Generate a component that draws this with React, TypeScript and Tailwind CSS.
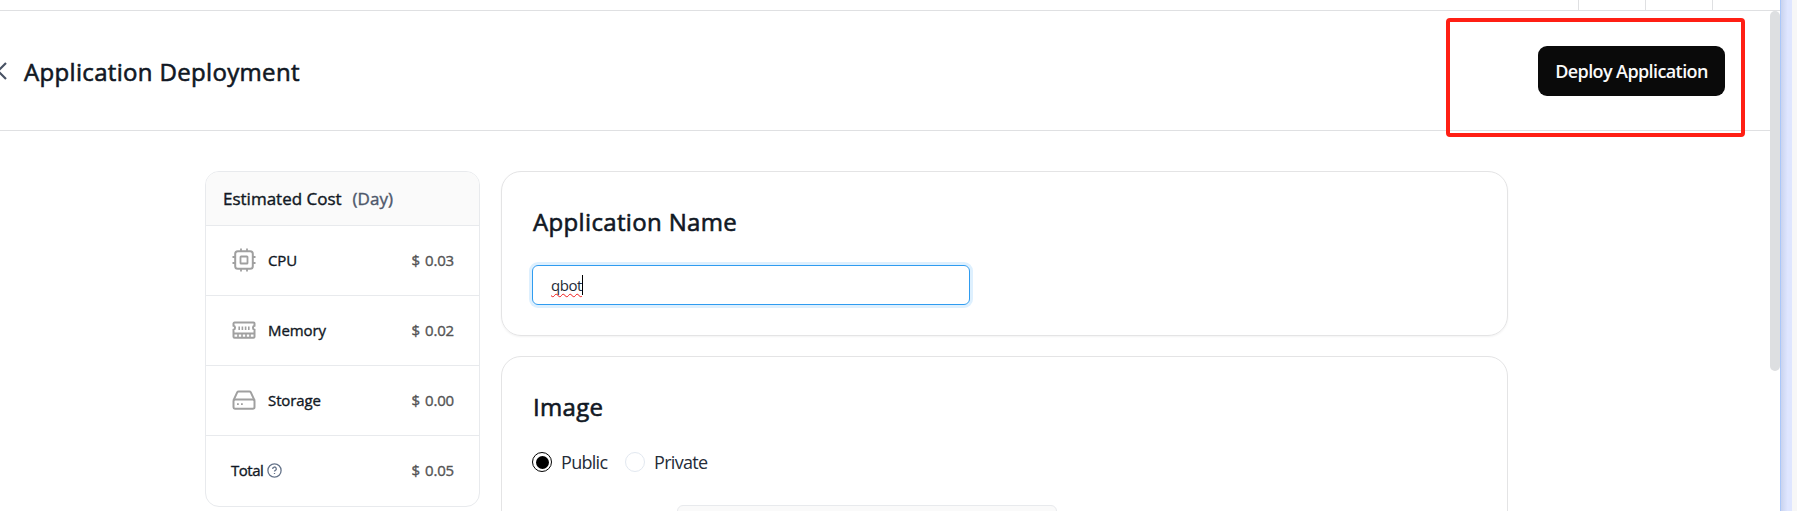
import type { ReactNode } from 'react';

function CpuIcon() {
  return (
    <svg width="24" height="24" viewBox="0 0 24 24" fill="none" stroke="#a0a0a0" strokeWidth="2">
      <rect x="3.200" y="3.200" width="17.600" height="17.600" rx="2.600" />
      <rect x="8.500" y="8.500" width="7" height="7" rx="0.600" strokeWidth="1.800" />
      <path d="M9 3V.5M15 3V.5M9 23.500V21M15 23.500V21M3 9H.5M3 15H.5M23.500 9H21M23.500 15H21" strokeWidth="1.800" />
    </svg>
  );
}

function MemoryIcon() {
  return (
    <svg width="24" height="24" viewBox="0 0 24 24" fill="none" stroke="#a0a0a0" strokeWidth="2">
      <path d="M2.500 4.600h19a1 1 0 0 1 1 1v2.200a2 2 0 0 0 0 3.900v7.100a1 1 0 0 1-1 1H2.500a1 1 0 0 1-1-1v-7.100a2 2 0 0 0 0-3.900V5.600a1 1 0 0 1 1-1Z" />
      <path d="M1.500 15.500h21" strokeWidth="1.800" />
      <path d="M7.200 8.400v3.600M10.400 8.400v3.600M13.600 8.400v3.600M16.800 8.400v3.600M6 16v3.500M10 16v3.500M14 16v3.500M18 16v3.500" strokeWidth="1.600" />
    </svg>
  );
}

function StorageIcon() {
  return (
    <svg width="24" height="24" viewBox="0 0 24 24" fill="none" stroke="#a0a0a0" strokeWidth="2" strokeLinejoin="round">
      <path d="M1.500 12.400 5.300 4.200a1.500 1.500 0 0 1 1.300-.8h10.800a1.500 1.500 0 0 1 1.300.8l3.800 8.200" />
      <rect x="1.500" y="11.500" width="21" height="9.200" rx="1.400" />
      <path d="M5 16.100h1.800M9 16.100h1.800" strokeWidth="1.800" />
    </svg>
  );
}

function Price({ children }: { children: string }) {
  return (
    <span className="ml-auto text-[15px] tracking-[-0.2px] text-[#545454] [-webkit-text-stroke:0.35px_#545454] [word-spacing:1.5px]">
      {children}
    </span>
  );
}

function CostRow({ icon, label, price }: { icon: ReactNode; label: string; price: string }) {
  return (
    <div className="flex h-[70px] items-center border-b border-[#e8eaed] pr-[25px] pb-px pl-[26px]">
      {icon}
      <span className="ml-[12px] text-[15px] tracking-[-0.1px] [-webkit-text-stroke:0.35px_#111824]">{label}</span>
      <Price>{price}</Price>
    </div>
  );
}

export default function App() {
  return (
    <div className="relative flex h-[511px] w-[1797px] overflow-hidden bg-[#f7f7f7] font-['Open_Sans','Noto_Sans',sans-serif] text-[#111824]">
      <div className="flex w-[1780px] flex-col bg-white">
        <div className="flex h-[11px] shrink-0 justify-end border-b border-[#dfe0e2] pr-[67px]">
          <div className="w-[67px] border-l border-[#dfe0e2]" />
          <div className="w-[68px] border-x border-[#dfe0e2]" />
        </div>
        <div className="flex flex-1">
          <div className="flex w-[1770px] flex-col">
            <header className="flex h-[120px] shrink-0 items-center border-b border-[#dfe0e2] pr-[45px]">
              <svg width="7" height="20" viewBox="0 0 7 20" fill="none" stroke="#485264" strokeWidth="2.200">
                <path d="M6 2-2 10l8 8" />
              </svg>
              <h1 className="ml-[17px] pt-0.5 text-[24px] tracking-[0.33px] whitespace-nowrap [-webkit-text-stroke:0.6px_#111824]">Application Deployment</h1>
              <button className="ml-auto h-[50px] w-[187px] rounded-[9px] bg-[#0a0a0a] pt-px text-[18px] font-semibold tracking-[-0.6px] whitespace-nowrap text-[#fafafa]">
                Deploy Application
              </button>
            </header>
            <main className="flex items-start gap-[21px] pt-10 pl-[205px]">
              <aside className="w-[275px] overflow-hidden rounded-[14px] border border-[#e8eaed]">
                <div className="flex h-[54px] items-center border-b border-[#e8eaed] bg-[#fafafa] pl-[17px] text-[17px] whitespace-nowrap">
                  <span className="[-webkit-text-stroke:0.4px_#111824]">Estimated Cost</span>
                  <span className="ml-[11px] text-[#4e586b] [-webkit-text-stroke:0.4px_#4e586b]">(Day)</span>
                </div>
                <CostRow icon={<CpuIcon />} label="CPU" price="$ 0.03" />
                <CostRow icon={<MemoryIcon />} label="Memory" price="$ 0.02" />
                <CostRow icon={<StorageIcon />} label="Storage" price="$ 0.00" />
                <div className="flex h-[70px] items-center pr-[25px] pb-px pl-[25px] text-[15px]">
                  <span className="tracking-[-0.5px] [-webkit-text-stroke:0.35px_#111824]">Total</span>
                  <svg className="ml-1" width="15" height="15" viewBox="0 0 15 15" fill="none" stroke="#67758b" strokeWidth="1.300">
                    <circle cx="7.500" cy="7.500" r="6.600" />
                    <path d="M5.700 5.900a1.800 1.800 0 1 1 2.700 1.500c-.6.300-.9.600-.9 1.200M7.500 9.900v1.200" />
                  </svg>
                  <Price>$ 0.05</Price>
                </div>
              </aside>
              <div className="flex w-[1007px] flex-col gap-5">
                <section className="h-[165px] rounded-[20px] border border-[#e4e4e5] px-[30px] pt-[34px] shadow-xs">
                  <h2 className="pl-px text-[24px] leading-8 tracking-[0.35px] [-webkit-text-stroke:0.6px_#111824]">Application Name</h2>
                  <div className="mt-[27px] flex h-10 w-[438px] items-center rounded-md border border-[#2f9cf0] pl-[18px] text-[15px] text-[#252c38] ring-3 ring-[#def0fe]">
                    <span className="tracking-[-0.45px] underline decoration-[#f01c1c] decoration-wavy decoration-1 underline-offset-[2px] [text-decoration-skip-ink:none]">qbot</span>
                    <span className="h-5 w-px bg-black" />
                  </div>
                </section>
                <section className="h-[240px] rounded-[20px] border border-[#e4e4e5] px-[30px] pt-[34px]">
                  <h2 className="pl-px text-[24px] leading-8 tracking-[0.3px] [-webkit-text-stroke:0.6px_#111824]">Image</h2>
                  <div className="mt-[29px] flex h-5 items-center text-[18px] tracking-[-0.7px] text-[#252c38]">
                    <span className="flex size-5 items-center justify-center rounded-full border border-black">
                      <span className="size-[13px] rounded-full bg-black" />
                    </span>
                    <span className="ml-[9px] w-[64px] pt-px">Public</span>
                    <span className="size-5 rounded-full border border-[#e2e8f0]" />
                    <span className="ml-[9px] pt-px">Private</span>
                  </div>
                  <div className="mt-[33px] ml-[145px] h-10 w-[380px] rounded-md border border-[#e8eaed] bg-[#fafafa]" />
                </section>
              </div>
            </main>
          </div>
          <div className="h-[360px] w-[10px] rounded-full bg-[#dddfe1]" />
        </div>
      </div>
      <div className="w-3 border-l border-[#a9c7fa] bg-linear-to-r from-[#c9d3ee] to-[#dfe6ff] to-60%" />
      <div className="absolute top-[18px] left-[1446px] h-[119px] w-[299px] rounded border-4 border-[#ff1f14]" />
    </div>
  );
}
